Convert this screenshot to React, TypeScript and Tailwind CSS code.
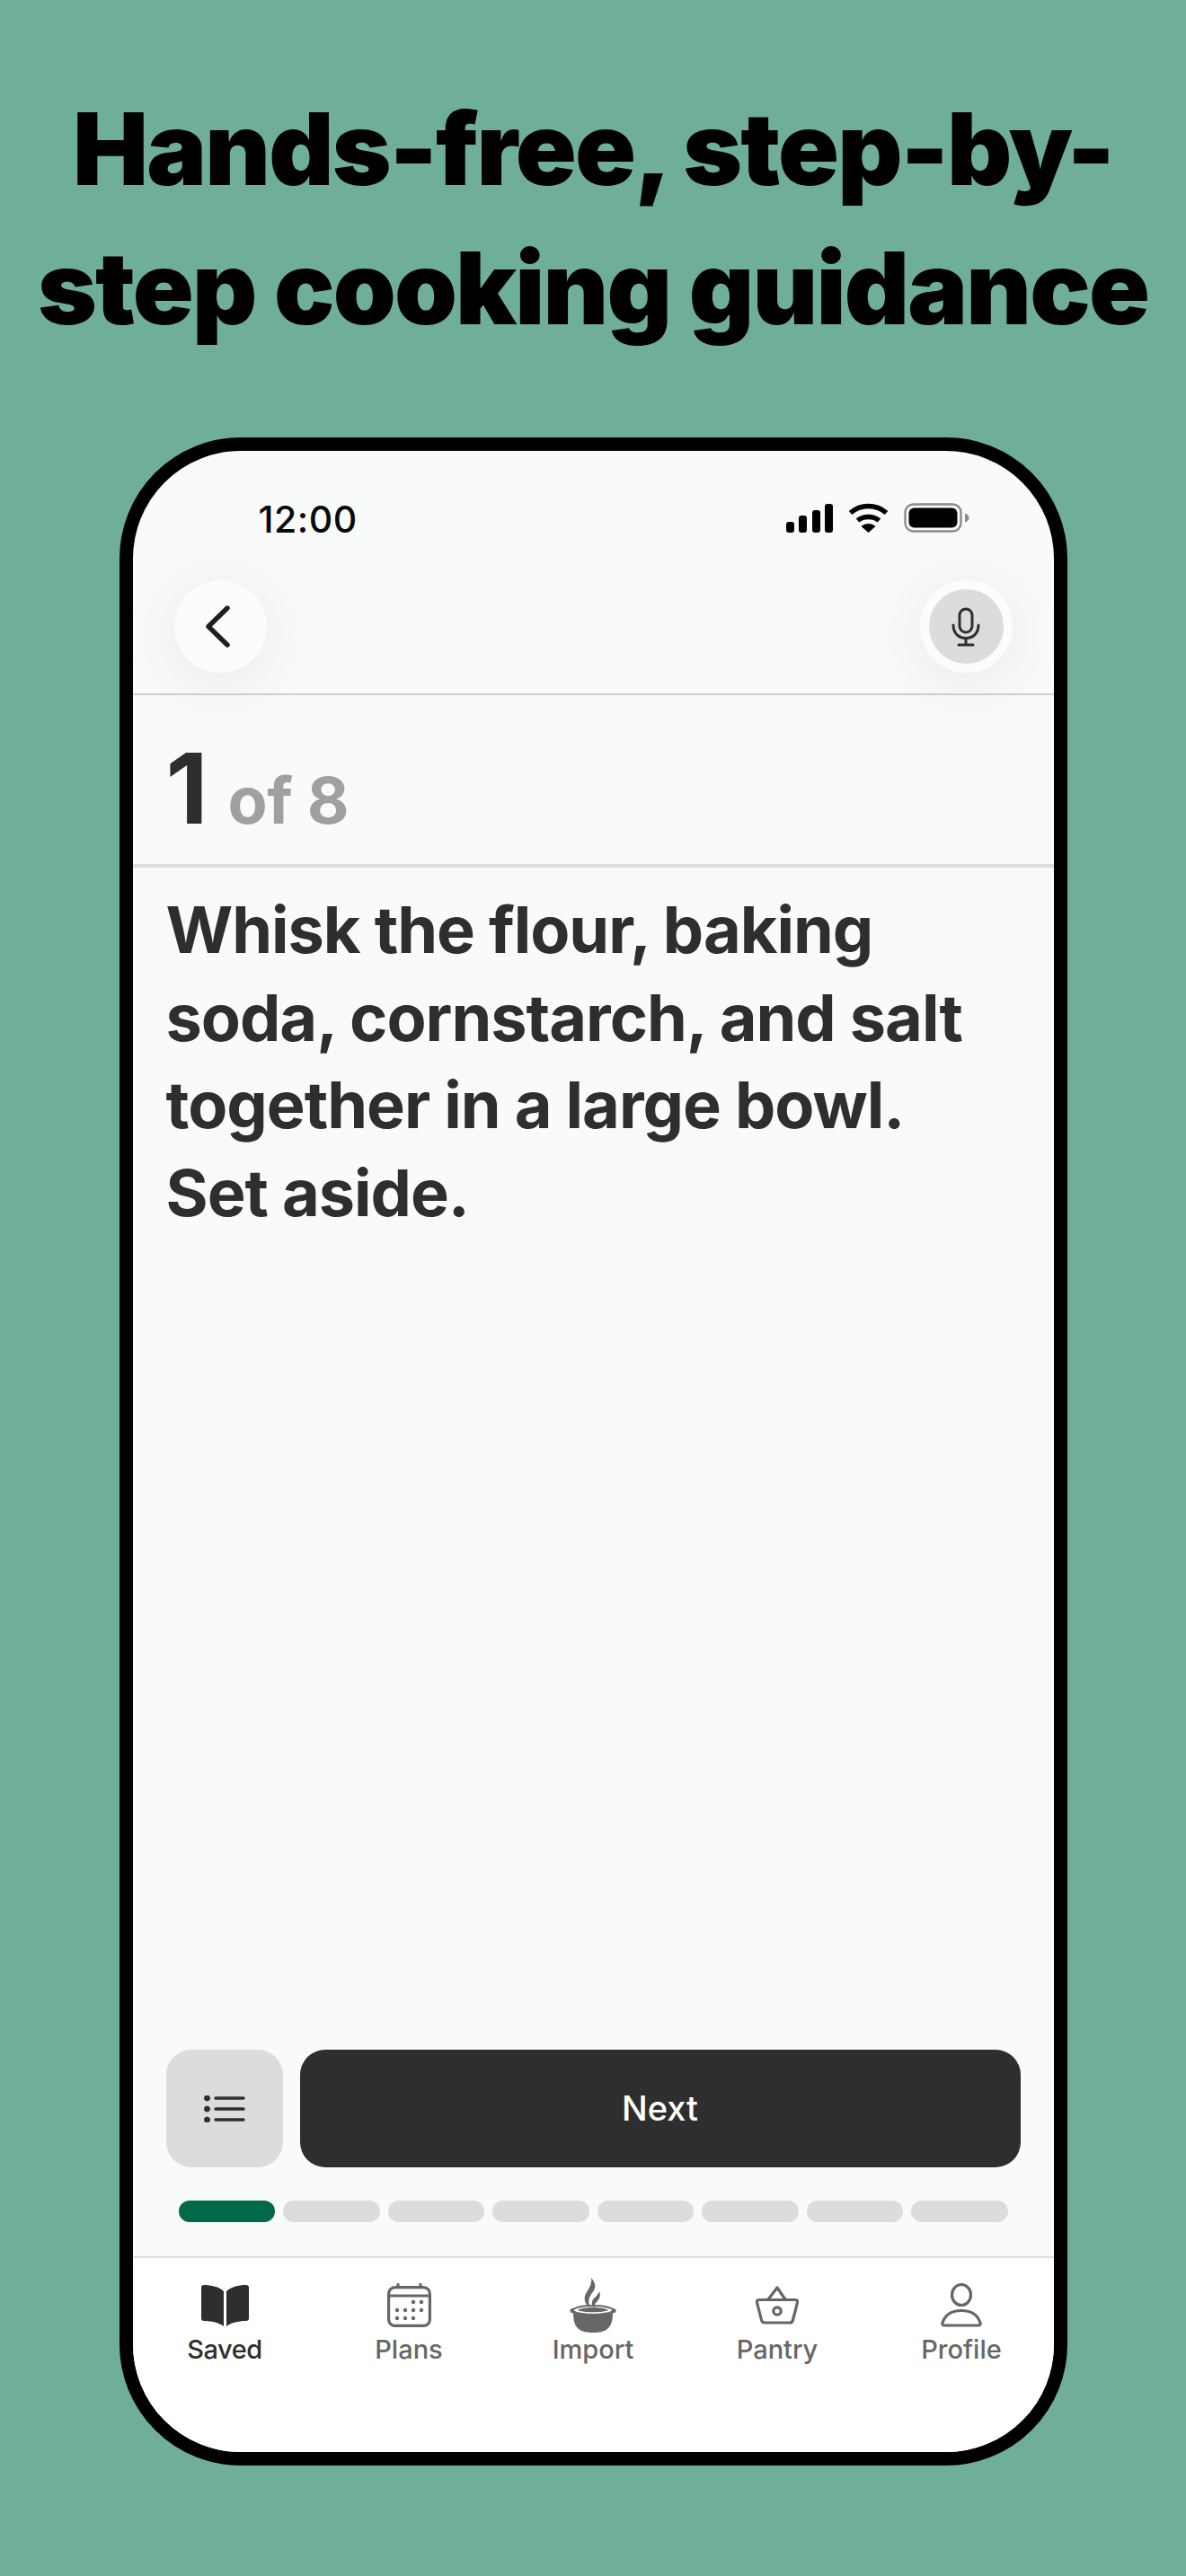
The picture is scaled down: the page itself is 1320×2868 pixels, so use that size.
import React from 'react';

function BackIcon() {
  return (
    <svg width="32" height="49" viewBox="0 0 32 49" fill="none" stroke="#1f1f1f" strokeWidth="5.4" strokeLinecap="round" strokeLinejoin="round">
      <path d="M27 4 L6 24.5 L27 45" />
    </svg>
  );
}

function MicIcon() {
  return (
    <svg width="32" height="44" viewBox="0 0 32 44" fill="none" stroke="#2e2e2e" strokeWidth="3" strokeLinecap="round">
      <rect x="9" y="2" width="14" height="26" rx="7" />
      <path d="M2 20 C2 29 8 34.5 16 34.5 C24 34.5 30 29 30 20" />
      <path d="M16 34.5 V42 M8 42 H24" />
    </svg>
  );
}

function ListIcon() {
  return (
    <svg width="46" height="30" viewBox="0 0 46 30" fill="#2e2e2e" stroke="#2e2e2e" strokeLinecap="round">
      <circle cx="3.5" cy="3" r="3" strokeWidth="1" />
      <circle cx="3.5" cy="15" r="3" strokeWidth="1" />
      <circle cx="3.5" cy="27" r="3" strokeWidth="1" />
      <path d="M13 3 H44 M13 15 H44 M13 27 H44" strokeWidth="3.4" />
    </svg>
  );
}

function SignalIcon() {
  return (
    <svg width="52" height="32" viewBox="0 0 52 32" fill="#000">
      <rect x="0" y="20" width="9" height="12" rx="3" />
      <rect x="14" y="13" width="9" height="19" rx="3" />
      <rect x="29" y="7" width="9" height="25" rx="3" />
      <rect x="43" y="0" width="9" height="32" rx="3" />
    </svg>
  );
}

function WifiIcon() {
  return (
    <svg width="45" height="33" viewBox="0 0 45 33" fill="none" stroke="#000" strokeWidth="5.5">
      <path d="M2.5 11 C14 1 31 1 42.5 11" />
      <path d="M10.5 19.5 C17 14 28 14 34.5 19.5" />
      <path d="M22.5 33 L14.5 26 C19 22 26 22 30.5 26 Z" fill="#000" stroke="none" />
    </svg>
  );
}

function BatteryIcon() {
  return (
    <svg width="73" height="33" viewBox="0 0 73 33" fill="none">
      <rect x="1.5" y="1.5" width="62" height="30" rx="9" stroke="#8c8c8c" strokeWidth="2.4" />
      <rect x="5.5" y="5.5" width="54" height="22" rx="6" fill="#000" />
      <path d="M68 11.5 C71 12.5 72.5 14.5 72.5 16.5 C72.5 18.5 71 20.5 68 21.5 Z" fill="#8c8c8c" />
    </svg>
  );
}

function BookIcon() {
  return (
    <svg width="53" height="46" viewBox="0 0 53 46" fill="#2e2e2e">
      <path d="M3 0 C11 0 20 2 25 7 V46 C20 42 11 40 3 40 Q0 40 0 37 V3 Q0 0 3 0 Z" />
      <path d="M50 0 C42 0 33 2 28 7 V46 C33 42 42 40 50 40 Q53 40 53 37 V3 Q53 0 50 0 Z" />
    </svg>
  );
}

function CalendarIcon() {
  const dots = [
    [29, 21], [38, 21],
    [11, 30], [20, 30], [29, 30], [38, 30],
    [11, 39], [20, 39], [29, 39],
  ];
  return (
    <svg width="49" height="49" viewBox="0 0 49 49" fill="none" stroke="#666" strokeWidth="3.2" strokeLinecap="round">
      <rect x="1.6" y="4.6" width="45.8" height="42.8" rx="7" />
      <path d="M2 14 H47 M12 1.5 V4 M37 1.5 V4" />
      {dots.map(([x, y]) => (
        <circle key={`${x}-${y}`} cx={x} cy={y} r="2.2" fill="#666" stroke="none" />
      ))}
    </svg>
  );
}

function PotIcon() {
  return (
    <svg width="52" height="61" viewBox="0 0 52 61" fill="#666">
      <path d="M24 0 C29 6 30 11 25 17 C21 22 20 27 23 33 C16 29 15 22 19 16 C22 11 25 7 24 0 Z" />
      <path d="M33 15 C35 20 33 24 30 27 C28 29 27 31 28 34 C24 31 24 26 27 23 C30 20 32 18 33 15 Z" />
      <path d="M4 38 C9 42 43 42 48 38 C48 46 47 53 42 57 C38 60 33 61 26 61 C19 61 14 60 10 57 C5 53 4 46 4 38 Z" />
      <ellipse cx="26" cy="36" rx="22" ry="5" fill="none" stroke="#666" strokeWidth="2" />
      <path d="M9 36 C14 32 38 32 43 36 C38 39 14 39 9 36 Z" />
      <path d="M4 34 C1 34 0 36 0.5 37.5 C1 39 3 39.5 5 39 Z M48 34 C51 34 52 36 51.5 37.5 C51 39 49 39.5 47 39 Z" />
    </svg>
  );
}

function BasketIcon() {
  return (
    <svg width="48" height="43" viewBox="0 0 48 43" fill="none" stroke="#666" strokeWidth="3.2" strokeLinecap="round" strokeLinejoin="round">
      <path d="M14 15 L24 2 L33 15" />
      <path d="M4 15.5 H44 Q47 15.5 46.5 18.5 L41.5 38 Q40.8 41 38 41 H10 Q7.2 41 6.5 38 L1.5 18.5 Q1 15.5 4 15.5 Z" />
      <circle cx="24" cy="28" r="4.2" />
    </svg>
  );
}

function PersonIcon() {
  return (
    <svg width="46" height="49" viewBox="0 0 46 49" fill="none" stroke="#666" strokeWidth="3.2" strokeLinejoin="round">
      <ellipse cx="23" cy="13" rx="10.5" ry="11.5" />
      <path d="M4 47 C2.2 47 1.4 45.6 2 44 C5 35 13 30.5 23 30.5 C33 30.5 41 35 44 44 C44.6 45.6 43.8 47 42 47 Z" />
    </svg>
  );
}

const tabs = [
  { label: 'Saved', icon: <BookIcon />, active: true },
  { label: 'Plans', icon: <CalendarIcon /> },
  { label: 'Import', icon: <PotIcon /> },
  { label: 'Pantry', icon: <BasketIcon /> },
  { label: 'Profile', icon: <PersonIcon /> },
];

export default function App() {
  return (
    <div className="flex h-[2868px] w-[1320px] flex-col items-center overflow-hidden bg-[#6eae9b] font-['Inter',sans-serif]">
      <h1 className="mt-[88px] mb-[88px] h-[311px] w-full text-center text-[112px] leading-[155px] font-black tracking-[-1.8px] text-black">
        Hands-free, step-by-
        <br />
        step cooking guidance
      </h1>

      <div className="flex h-[2258px] w-[1055px] shrink-0 flex-col overflow-hidden rounded-[135px] border-[15px] border-black bg-[#f9fbfa]">
        <div className="flex h-[144px] shrink-0 items-start justify-between pt-[58px] pr-[94px] pl-[140px]">
          <span className="text-[41px] leading-[36px] font-medium tracking-[0.5px] text-[#0a0a0a]">12:00</span>
          <div className="flex items-center gap-[17px]">
            <SignalIcon />
            <WifiIcon />
            <BatteryIcon />
          </div>
        </div>

        <div className="flex h-[128px] shrink-0 items-start justify-between border-b-2 border-[#cfd1d0] pr-[46px] pl-[46px]">
          <button className="flex h-[103px] w-[103px] items-center justify-center rounded-full bg-[#fcfcfc] pr-[6px] shadow-[0_10px_70px_rgba(0,0,0,0.08)]">
            <BackIcon />
          </button>
          <button className="flex h-[103px] w-[103px] items-center justify-center rounded-full border-[10px] border-[#fcfcfc] bg-[#dbdcdb] shadow-[0_10px_70px_rgba(0,0,0,0.08)]">
            <MicIcon />
          </button>
        </div>

        <div className="flex h-[192px] shrink-0 items-baseline gap-[22px] border-b-4 border-[#dcdddc] pt-[38px] pl-[37px] text-[#2e2e2e]">
          <span className="text-[109px] leading-[130px] font-bold">1</span>
          <span className="text-[72px] leading-[130px] font-bold tracking-[-0.5px] text-[#a0a0a0]">of 8</span>
        </div>

        <p className="mt-[20px] grow pr-[60px] pl-[37px] text-[72px] leading-[97.5px] font-bold tracking-[-1px] text-[#2e2e2e]">
          Whisk the flour, baking soda, cornstarch, and salt together in a large bowl. Set aside.
        </p>

        <div className="flex shrink-0 gap-[19px] pr-[37px] pl-[37px]">
          <button className="flex h-[131px] w-[130px] shrink-0 items-center justify-center rounded-[28px] bg-[#dbdcdb]">
            <ListIcon />
          </button>
          <button className="h-[131px] grow rounded-[28px] bg-[#2e2e2e] text-[38px] font-medium text-white">Next</button>
        </div>

        <div className="mt-[37px] mb-[38px] flex h-[24px] shrink-0 gap-[9px] pr-[51px] pl-[51px]">
          {[0, 1, 2, 3, 4, 5, 6, 7].map((i) => (
            <div key={i} className={i === 0 ? 'grow basis-0 rounded-full bg-[#00694a]' : 'grow basis-0 rounded-full bg-[#dbdcdb]'} />
          ))}
        </div>

        <nav className="flex h-[218px] shrink-0 items-start border-t-2 border-[#dcdddc] bg-white pt-[21px]">
          {tabs.map((tab) => (
            <div key={tab.label} className="flex w-[205px] flex-col items-center">
              <div className="flex h-[63px] items-center justify-center">{tab.icon}</div>
              <span className={tab.active ? 'text-[29px] leading-[36px] font-medium tracking-[-0.5px] text-[#2e2e2e]' : 'text-[29px] leading-[36px] font-medium text-[#666666]'}>
                {tab.label}
              </span>
            </div>
          ))}
        </nav>
      </div>
    </div>
  );
}
